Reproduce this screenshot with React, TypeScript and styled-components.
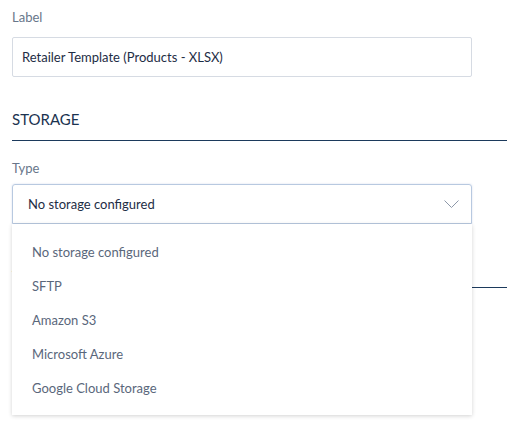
import React from "react";
import styled, { createGlobalStyle } from "styled-components";

const Global = createGlobalStyle`
  html, body { margin: 0; padding: 0; background: #ffffff; min-height: 100vh; }
  body { font-family: Lato, "Open Sans", sans-serif; -webkit-font-smoothing: antialiased; }
`;

const Page = styled.div`
  padding: 9px 0 0 12px;
  display: flex;
  flex-direction: column;
  min-height: 436px;
  box-sizing: border-box;
`;

const Field = styled.div`
  display: flex;
  flex-direction: column;
  width: 460px;
  position: relative;
`;

const FieldLabel = styled.label<{ $gap: number }>`
  font-size: 13px;
  line-height: 16px;
  color: #68768a;
  margin-bottom: ${(p) => p.$gap}px;
`;

const TextInput = styled.div`
  box-sizing: border-box;
  height: 40px;
  border: 1px solid #d6dbe3;
  border-radius: 2px;
  padding: 0 9px;
  display: flex;
  align-items: center;
  font-size: 13px;
  color: #1e2d45;
`;

const SectionHeader = styled.div`
  margin-top: 33px;
  padding-bottom: 12px;
  border-bottom: 1px solid #1c3a5c;
  font-size: 15px;
  line-height: 18px;
  color: #1b3350;
  margin-bottom: 19px;
`;

const SelectBox = styled.div`
  box-sizing: border-box;
  height: 40px;
  border: 1px solid #b8c9e0;
  border-radius: 3px 3px 0 0;
  padding: 0 12px 0 15px;
  display: flex;
  align-items: center;
  justify-content: space-between;
  font-size: 13px;
  color: #1e2d45;
  box-shadow: 0 0 2px rgba(120, 150, 200, 0.35);
`;

const Menu = styled.ul`
  position: absolute;
  top: 100%;
  left: 0;
  right: 0;
  margin: 0;
  padding: 11px 0 10px;
  list-style: none;
  background: #ffffff;
  box-shadow: 0 1px 4px rgba(0, 0, 0, 0.18);
  z-index: 10;
`;

const MenuItem = styled.li`
  height: 34px;
  display: flex;
  align-items: center;
  padding-left: 20px;
  font-size: 13px;
  color: #5a677b;
`;

const Chevron = () => (
  <svg width="15" height="8" viewBox="0 0 15 8" fill="none">
    <path d="M0.5 0.5 L7.5 7.5 L14.5 0.5" stroke="#8d98a9" strokeWidth="1" />
  </svg>
);

const options = [
  "No storage configured",
  "SFTP",
  "Amazon S3",
  "Microsoft Azure",
  "Google Cloud Storage",
];

export default function App() {
  return (
    <>
      <Global />
      <Page>
        <Field>
          <FieldLabel $gap={12}>Label</FieldLabel>
          <TextInput>Retailer Template (Products - XLSX)</TextInput>
        </Field>
        <SectionHeader>STORAGE</SectionHeader>
        <Field>
          <FieldLabel $gap={8}>Type</FieldLabel>
          <SelectBox>
            <span>No storage configured</span>
            <Chevron />
          </SelectBox>
          <Menu>
            {options.map((o) => (
              <MenuItem key={o}>{o}</MenuItem>
            ))}
          </Menu>
        </Field>
        <SectionHeader>ADVANCED</SectionHeader>
      </Page>
    </>
  );
}
